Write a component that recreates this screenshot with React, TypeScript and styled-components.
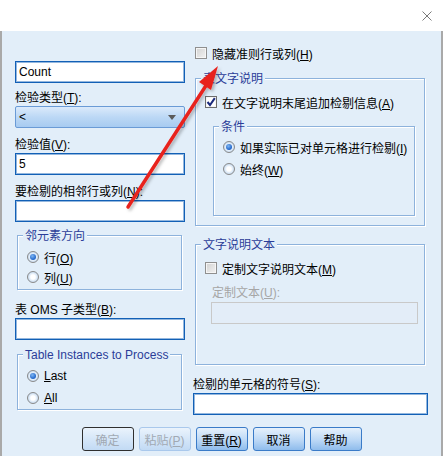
import React from "react";
import styled, { createGlobalStyle } from "styled-components";

const GlobalStyle = createGlobalStyle`
  * { box-sizing: border-box; }
  html, body { margin: 0; padding: 0; background: #ffffff; }
  body {
    font-family: "Liberation Sans", "Noto Sans CJK SC", sans-serif;
    font-size: 12px;
    color: #000;
  }
`;

const Window = styled.div`
  position: relative;
  width: 443px;
  height: 462px;
  background: #ffffff;
  overflow: hidden;
`;

const TitleBar = styled.div`
  height: 31px;
  display: flex;
  align-items: center;
  justify-content: flex-end;
  padding-right: 11px;
  background: #ffffff;
`;

const CloseButton = styled.button`
  width: 10px;
  height: 10px;
  padding: 0;
  border: 0;
  background: none;
  display: flex;
`;

const Body = styled.div`
  height: 425px;
  background: #e2eef9;
  border-left: 2px solid #a9a9a9;
  border-right: 2px solid #a9a9a9;
  padding: 0 13px 5px 13px;
  display: flex;
  flex-direction: column;
`;

const Columns = styled.div`
  display: grid;
  grid-template-columns: 170px 235px;
  column-gap: 8px;
`;

const Column = styled.div<{ $top: number }>`
  display: flex;
  flex-direction: column;
  padding-top: ${(p) => p.$top}px;
`;

const Label = styled.div<{ $mt?: number; $ml?: number; $disabled?: boolean }>`
  height: 16px;
  line-height: 16px;
  margin-top: ${(p) => p.$mt ?? 0}px;
  margin-left: ${(p) => p.$ml ?? 0}px;
  color: ${(p) => (p.$disabled ? "#a6a6a6" : "#000")};
  white-space: nowrap;
`;

const Mn = styled.u`
  text-decoration: underline;
  text-underline-offset: 1px;
`;

const TextBox = styled.div<{ $mt?: number; $mx?: number; $disabled?: boolean }>`
  height: 22px;
  margin-top: ${(p) => p.$mt ?? 0}px;
  margin-left: ${(p) => p.$mx ?? 0}px;
  margin-right: ${(p) => p.$mx ?? 0}px;
  padding: 0 3px;
  line-height: 20px;
  background: ${(p) => (p.$disabled ? "#e3edf8" : "#ffffff")};
  border: 1px solid ${(p) => (p.$disabled ? "#c9c9c9" : "#1260b6")};
  box-shadow: ${(p) => (p.$disabled ? "none" : "inset 0 0 0 1px rgba(18, 96, 182, 0.45)")};
  font-size: 12px;
  color: #000;
`;

const Select = styled.div`
  height: 22px;
  display: flex;
  align-items: center;
  justify-content: space-between;
  padding: 0 8px 0 3px;
  border: 1px solid #6a9bd6;
  border-radius: 2px;
  background: linear-gradient(#dbeafb, #bcd8f5 50%, #a7cbf1);
  font-size: 12px;
`;

const Caret = styled.span`
  width: 0;
  height: 0;
  border-left: 4px solid transparent;
  border-right: 4px solid transparent;
  border-top: 5px solid #5a5a5a;
`;

const Group = styled.div<{ $mt: number; $pad: string; $ml?: number; $mr?: number }>`
  position: relative;
  margin-top: ${(p) => p.$mt}px;
  margin-left: ${(p) => p.$ml ?? 0}px;
  margin-right: ${(p) => p.$mr ?? 0}px;
  padding: ${(p) => p.$pad};
  border: 1px solid #8db2dc;
  box-shadow: 1px 1px 0 #ffffff, inset 1px 1px 0 #ffffff;
  display: flex;
  flex-direction: column;
`;

const Legend = styled.span`
  position: absolute;
  top: -8px;
  left: 5px;
  padding: 0 2px;
  height: 16px;
  line-height: 16px;
  background: #e2eef9;
  color: #2b3d98;
  white-space: nowrap;
`;

const Option = styled.label<{ $mt?: number; $ml?: number; $disabled?: boolean }>`
  display: flex;
  align-items: center;
  gap: 5px;
  height: 16px;
  margin-top: ${(p) => p.$mt ?? 0}px;
  margin-left: ${(p) => p.$ml ?? 0}px;
  color: ${(p) => (p.$disabled ? "#a6a6a6" : "#000")};
  white-space: nowrap;
`;

const Radio = styled.span<{ $checked?: boolean }>`
  position: relative;
  width: 12px;
  height: 12px;
  flex: none;
  border-radius: 50%;
  border: 1px solid #8a8a8a;
  background: radial-gradient(circle, #ffffff 30%, #c3d9f0 75%, #e8eef5);
  &::after {
    content: "";
    position: absolute;
    left: 2px;
    top: 2px;
    width: 6px;
    height: 6px;
    border-radius: 50%;
    background: radial-gradient(circle at 40% 35%, #7fb6f2, #1d63c9 70%);
    display: ${(p) => (p.$checked ? "block" : "none")};
  }
`;

const Check = styled.span<{ $checked?: boolean }>`
  width: 12px;
  height: 12px;
  flex: none;
  display: flex;
  align-items: center;
  justify-content: center;
  border: 1px solid ${(p) => (p.$checked ? "#6d6d6d" : "#8f8f8f")};
  background: ${(p) =>
    p.$checked ? "#ffffff" : "linear-gradient(135deg, #d2d2d2, #f2f2f2)"};
  box-shadow: inset 0 0 0 1px #f6f6f6;
`;

const ButtonRow = styled.div`
  margin-top: 12px;
  display: flex;
  justify-content: center;
  gap: 5px;
`;

const Button = styled.button<{ $focused?: boolean }>`
  width: 52px;
  height: 24px;
  padding: 0;
  border-radius: 3px;
  border: 1px solid ${(p) => (p.$focused ? "#2f2f2f" : "#3a7bc8")};
  background: linear-gradient(#e6f1fc, #bcd8f6 55%, #8fbcec);
  font-family: "Liberation Sans", "Noto Sans CJK SC", sans-serif;
  font-size: 12px;
  color: #000;
  &:disabled {
    color: #a1a9b3;
    border-color: ${(p) => (p.$focused ? "#2f2f2f" : "#a9c8ec")};
    background: linear-gradient(#eaf3fc, #d3e5f8 55%, #c2daf4);
  }
`;

const ArrowOverlay = styled.svg`
  position: absolute;
  left: 0;
  top: 0;
  pointer-events: none;
`;

function CheckMark() {
  return (
    <svg width="10" height="10" viewBox="0 0 10 10">
      <path d="M1.5 5 L4 8 L8.8 1.2" fill="none" stroke="#1b2a7c" strokeWidth="2" />
    </svg>
  );
}

export default function App() {
  return (
    <Window>
      <GlobalStyle />
      <TitleBar>
        <CloseButton aria-label="close">
          <svg width="10" height="10" viewBox="0 0 10 10">
            <path d="M0.5 0.5 L9.5 9.5 M9.5 0.5 L0.5 9.5" stroke="#7a7a7a" strokeWidth="1" />
          </svg>
        </CloseButton>
      </TitleBar>
      <Body>
        <Columns>
          <Column $top={30}>
            <TextBox>Count</TextBox>
            <Label $mt={7}>
              检验类型(<Mn>T</Mn>):
            </Label>
            <Select>
              <span>&lt;</span>
              <Caret />
            </Select>
            <Label $mt={9}>
              检验值(<Mn>V</Mn>):
            </Label>
            <TextBox>5</TextBox>
            <Label $mt={9}>
              要检剔的相邻行或列(<Mn>N</Mn>):
            </Label>
            <TextBox />
            <Group $mt={13} $ml={2} $mr={3} $pad="13px 0 4px 9px">
              <Legend>邻元素方向</Legend>
              <Option>
                <Radio $checked />
                <span>
                  行(<Mn>O</Mn>)
                </span>
              </Option>
              <Option $mt={4}>
                <Radio />
                <span>
                  列(<Mn>U</Mn>)
                </span>
              </Option>
            </Group>
            <Label $mt={12}>
              表 OMS 子类型(<Mn>B</Mn>):
            </Label>
            <TextBox />
            <Group $mt={14} $ml={2} $mr={3} $pad="13px 0 3px 9px">
              <Legend>Table Instances to Process</Legend>
              <Option>
                <Radio $checked />
                <span>
                  <Mn>L</Mn>ast
                </span>
              </Option>
              <Option $mt={6}>
                <Radio />
                <span>
                  <Mn>A</Mn>ll
                </span>
              </Option>
            </Group>
          </Column>

          <Column $top={14}>
            <Option $ml={2}>
              <Check />
              <span>
                隐藏准则行或列(<Mn>H</Mn>)
              </span>
            </Option>
            <Group $mt={17} $ml={2} $mr={3} $pad="15px 9px 9px 9px">
              <Legend>表文字说明</Legend>
              <Option>
                <Check $checked>
                  <CheckMark />
                </Check>
                <span>
                  在文字说明末尾追加检剔信息(<Mn>A</Mn>)
                </span>
              </Option>
              <Group $mt={16} $ml={8} $pad="12px 0 38px 9px">
                <Legend>条件</Legend>
                <Option>
                  <Radio $checked />
                  <span>
                    如果实际已对单元格进行检剔(<Mn>I</Mn>)
                  </span>
                </Option>
                <Option $mt={6}>
                  <Radio />
                  <span>
                    始终(<Mn>W</Mn>)
                  </span>
                </Option>
              </Group>
            </Group>
            <Group $mt={18} $ml={2} $mr={3} $pad="15px 0 40px 9px">
              <Legend>文字说明文本</Legend>
              <Option>
                <Check />
                <span>
                  定制文字说明文本(<Mn>M</Mn>)
                </span>
              </Option>
              <Label $mt={9} $ml={7} $disabled>
                定制文本(<Mn>U</Mn>):
              </Label>
              <TextBox $mt={1} $mx={6} $disabled />
            </Group>
            <Label $mt={12}>
              检剔的单元格的符号(<Mn>S</Mn>):
            </Label>
            <TextBox />
          </Column>
        </Columns>
        <ButtonRow>
          <Button $focused disabled>
            确定
          </Button>
          <Button disabled>
            粘贴(<Mn>P</Mn>)
          </Button>
          <Button>
            重置(<Mn>R</Mn>)
          </Button>
          <Button>取消</Button>
          <Button>帮助</Button>
        </ButtonRow>
      </Body>

      <ArrowOverlay width="443" height="462" viewBox="0 0 443 462">
        <defs>
          <filter id="shadow" x="-20%" y="-20%" width="140%" height="140%">
            <feDropShadow dx="2" dy="2" stdDeviation="1.5" floodColor="#000" floodOpacity="0.25" />
          </filter>
        </defs>
        <g filter="url(#shadow)">
          <line x1="128" y1="207" x2="207" y2="84" stroke="#e8231e" strokeWidth="3.5" strokeLinecap="round" />
          <polygon points="218,66 211,90 199,82" fill="#e8231e" />
        </g>
      </ArrowOverlay>
    </Window>
  );
}
